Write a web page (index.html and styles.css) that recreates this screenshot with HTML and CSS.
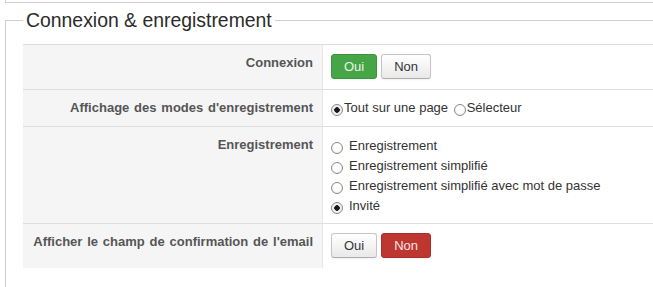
FILE: index.html
```html
<!DOCTYPE html>
<html lang="fr">
<head>
<meta charset="utf-8">
<title>Connexion &amp; enregistrement</title>
<link rel="stylesheet" href="styles.css">
</head>
<body>
<div class="prev"></div>
<fieldset class="fs">
  <legend class="fs-legend">Connexion &amp; enregistrement</legend>
  <div class="tbl">
    <div class="row">
      <div class="lbl">Connexion</div>
      <div class="ctl">
        <div class="btn-group">
          <span class="btn btn-success">Oui</span>
          <span class="btn">Non</span>
        </div>
      </div>
    </div>
    <div class="row">
      <div class="lbl">Affichage des modes d'enregistrement</div>
      <div class="ctl">
        <label class="inline"><input type="radio" name="mode" class="radio radio-tight" checked>Tout sur une page</label>
        <label class="inline inline-next"><input type="radio" name="mode" class="radio radio-tight">Sélecteur</label>
      </div>
    </div>
    <div class="row">
      <div class="lbl">Enregistrement</div>
      <div class="ctl ctl-list">
        <label class="line"><input type="radio" name="reg" class="radio">Enregistrement</label>
        <label class="line"><input type="radio" name="reg" class="radio">Enregistrement simplifié</label>
        <label class="line"><input type="radio" name="reg" class="radio">Enregistrement simplifié avec mot de passe</label>
        <label class="line"><input type="radio" name="reg" class="radio" checked>Invité</label>
      </div>
    </div>
    <div class="row row-last">
      <div class="lbl">Afficher le champ de confirmation de l'email</div>
      <div class="ctl">
        <div class="btn-group">
          <span class="btn">Oui</span>
          <span class="btn btn-danger">Non</span>
        </div>
      </div>
    </div>
  </div>
</fieldset>
</body>
</html>
```

FILE: styles.css
```css
html, body {
  margin: 0;
  padding: 0;
  background: #fff;
  overflow: hidden;
}
body {
  font-family: "Liberation Sans", Arial, sans-serif;
  font-size: 13px;
  line-height: 18px;
  color: #333;
}
.prev {
  height: 2px;
  margin: 0 -60px 0 5px;
  border-left: 1px solid #cfcfcf;
  border-bottom: 1px solid #cfcfcf;
}
.fs {
  margin: 5px -60px 0 5px;
  padding: 0 0 40px 17px;
  border: 1px solid #cfcfcf;
  border-bottom: none;
  min-width: 0;
}
.fs-legend {
  padding: 0 3px;
  margin: 0;
  font-size: 19.4px;
  line-height: 24px;
  color: #2b2b2b;
}
.tbl {
  margin-top: 12px;
}
.row {
  display: flex;
  border-top: 1px solid #dedede;
}
.row-last .lbl {
  padding-bottom: 10px;
}
.lbl {
  flex: 0 0 300px;
  box-sizing: border-box;
  background: #f5f5f5;
  border-right: 1px solid #e6e6e6;
  padding: 9px 9px 9px 6px;
  text-align: right;
  font-weight: bold;
  word-spacing: 1.2px;
  color: #555;
}
.ctl {
  flex: 1;
  padding: 9px 8px 9px 8px;
}
.btn-group {
  display: flex;
  gap: 4px;
}
.btn {
  display: block;
  padding: 3px 12px;
  line-height: 17px;
  font-size: 13px;
  color: #333;
  border: 1px solid #c5c5c5;
  border-bottom-color: #adadad;
  border-radius: 3px;
  background: linear-gradient(#ffffff, #e9e9e9);
  box-shadow: 0 1px 2px rgba(0, 0, 0, 0.06);
  margin-bottom: 1px;
}
.btn-success {
  background: #46a546;
  border-color: #3c953c;
  color: #e9f6e9;
}
.btn-danger {
  background: #bd362f;
  border-color: #a92f29;
  color: #f8e6e5;
}
.radio {
  -webkit-appearance: none;
  appearance: none;
  box-sizing: border-box;
  width: 12px;
  height: 12px;
  margin: 0 6px 0 0;
  border: 1px solid #8a8a8a;
  border-radius: 50%;
  background: radial-gradient(circle at 50% 40%, #ffffff 40%, #e6e6e6 100%);
  vertical-align: -4px;
}
.radio:checked {
  background: radial-gradient(circle, #1a1a1a 0, #1a1a1a 2.5px, #ececec 3px, #fafafa 100%);
}
.radio-tight {
  margin-right: 1px;
}
.inline-next {
  margin-left: 2px;
}
.ctl-list {
  padding-bottom: 7px;
}
.line {
  display: block;
  line-height: 20px;
}
```
